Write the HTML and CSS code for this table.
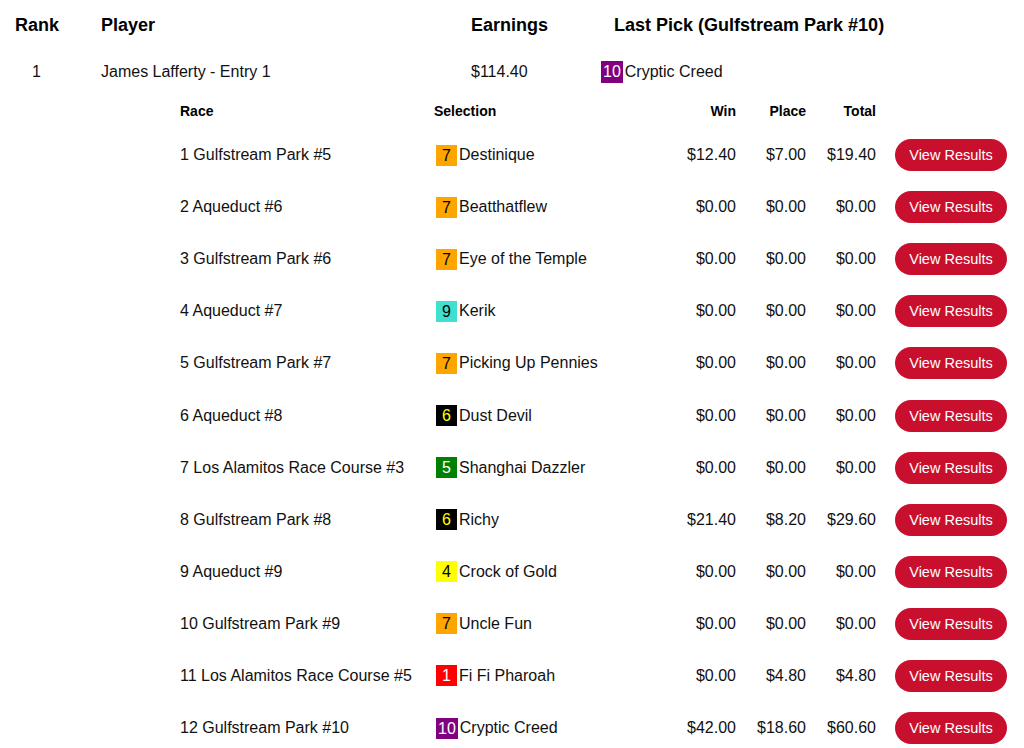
FILE: index.html
```html
<!DOCTYPE html>
<html>
<head>
<meta charset="utf-8">
<link rel="stylesheet" href="styles.css">
</head>
<body>
<div class="board">
  <div class="outer head">
    <div class="c-rank">Rank</div>
    <div>Player</div>
    <div>Earnings</div>
    <div class="c-last">Last Pick (Gulfstream Park #10)</div>
  </div>
  <div class="outer entry">
    <div class="c-rank">1</div>
    <div>James Lafferty - Entry 1</div>
    <div>$114.40</div>
    <div class="pick"><span class="badge b-purple">10</span>Cryptic Creed</div>
  </div>
  <div class="races">
    <div class="inner ihead">
      <div>Race</div>
      <div>Selection</div>
      <div class="num">Win</div>
      <div class="num">Place</div>
      <div class="num">Total</div>
      <div></div>
    </div>
    <div class="inner row"><div>1 Gulfstream Park #5</div><div class="pick"><span class="badge b-orange">7</span>Destinique</div><div class="num">$12.40</div><div class="num">$7.00</div><div class="num">$19.40</div><button class="btn">View Results</button></div>
    <div class="inner row"><div>2 Aqueduct #6</div><div class="pick"><span class="badge b-orange">7</span>Beatthatflew</div><div class="num">$0.00</div><div class="num">$0.00</div><div class="num">$0.00</div><button class="btn">View Results</button></div>
    <div class="inner row"><div>3 Gulfstream Park #6</div><div class="pick"><span class="badge b-orange">7</span>Eye of the Temple</div><div class="num">$0.00</div><div class="num">$0.00</div><div class="num">$0.00</div><button class="btn">View Results</button></div>
    <div class="inner row"><div>4 Aqueduct #7</div><div class="pick"><span class="badge b-turq">9</span>Kerik</div><div class="num">$0.00</div><div class="num">$0.00</div><div class="num">$0.00</div><button class="btn">View Results</button></div>
    <div class="inner row"><div>5 Gulfstream Park #7</div><div class="pick"><span class="badge b-orange">7</span>Picking Up Pennies</div><div class="num">$0.00</div><div class="num">$0.00</div><div class="num">$0.00</div><button class="btn">View Results</button></div>
    <div class="inner row"><div>6 Aqueduct #8</div><div class="pick"><span class="badge b-black">6</span>Dust Devil</div><div class="num">$0.00</div><div class="num">$0.00</div><div class="num">$0.00</div><button class="btn">View Results</button></div>
    <div class="inner row"><div>7 Los Alamitos Race Course #3</div><div class="pick"><span class="badge b-green">5</span>Shanghai Dazzler</div><div class="num">$0.00</div><div class="num">$0.00</div><div class="num">$0.00</div><button class="btn">View Results</button></div>
    <div class="inner row"><div>8 Gulfstream Park #8</div><div class="pick"><span class="badge b-black">6</span>Richy</div><div class="num">$21.40</div><div class="num">$8.20</div><div class="num">$29.60</div><button class="btn">View Results</button></div>
    <div class="inner row"><div>9 Aqueduct #9</div><div class="pick"><span class="badge b-yellow">4</span>Crock of Gold</div><div class="num">$0.00</div><div class="num">$0.00</div><div class="num">$0.00</div><button class="btn">View Results</button></div>
    <div class="inner row"><div>10 Gulfstream Park #9</div><div class="pick"><span class="badge b-orange">7</span>Uncle Fun</div><div class="num">$0.00</div><div class="num">$0.00</div><div class="num">$0.00</div><button class="btn">View Results</button></div>
    <div class="inner row"><div>11 Los Alamitos Race Course #5</div><div class="pick"><span class="badge b-red">1</span>Fi Fi Pharoah</div><div class="num">$0.00</div><div class="num">$4.80</div><div class="num">$4.80</div><button class="btn">View Results</button></div>
    <div class="inner row"><div>12 Gulfstream Park #10</div><div class="pick"><span class="badge b-purple">10</span>Cryptic Creed</div><div class="num">$42.00</div><div class="num">$18.60</div><div class="num">$60.60</div><button class="btn">View Results</button></div>
  </div>
</div>
</body>
</html>
```

FILE: styles.css
```css
html, body {
  margin: 0;
  padding: 0;
  background: #fff;
}
body {
  font-family: "Liberation Sans", Arial, Helvetica, sans-serif;
  color: #111;
  font-size: 16px;
}
.board {
  width: 1024px;
  padding-top: 1px;
}
.outer {
  display: grid;
  grid-template-columns: 101px 370px 130px 1fr;
  align-items: center;
}
.head {
  height: 48px;
  font-size: 18px;
  font-weight: bold;
  color: #000;
}
.entry {
  height: 46px;
}
.c-rank {
  width: 43px;
  margin-left: 15px;
  text-align: center;
}
.c-last {
  padding-left: 13px;
}
.pick {
  display: flex;
  align-items: center;
}
.badge {
  display: inline-block;
  min-width: 17px;
  height: 21px;
  line-height: 21px;
  padding: 0 2px;
  margin-right: 2px;
  text-align: center;
  font-size: 16px;
}
.row .badge {
  margin-left: 2px;
}
.entry .badge {
  height: 22px;
  line-height: 22px;
}
.b-orange { background: #ffa500; color: #000; }
.b-turq { background: #40e0d0; color: #000; }
.b-black { background: #000; color: #ffff00; }
.b-green { background: #008000; color: #fff; }
.b-yellow { background: #ffff00; color: #000; }
.b-red { background: #ff0000; color: #fff; }
.b-purple { background: #800080; color: #fff; }

.races {
  padding-left: 180px;
}
.inner {
  display: grid;
  grid-template-columns: 254px 232px 70px 70px 70px 131px;
  align-items: center;
}
.inner > .btn {
  justify-self: end;
}
.ihead {
  box-sizing: border-box;
  height: 34px;
  padding-bottom: 2px;
  font-size: 14px;
  font-weight: bold;
  color: #000;
}
.row {
  height: 52.1px;
}
.num {
  text-align: right;
}
.btn {
  width: 112px;
  height: 32px;
  border: none;
  border-radius: 16px;
  background: #c8102e;
  color: #fff;
  font-family: "Liberation Sans", Arial, Helvetica, sans-serif;
  font-size: 14.5px;
  padding: 0;
}
```
